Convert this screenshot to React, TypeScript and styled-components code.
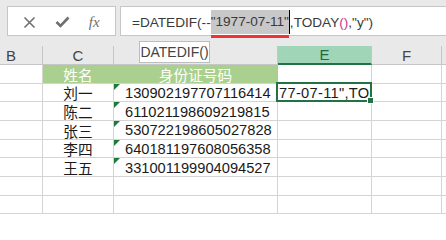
import React from 'react';
import styled, { createGlobalStyle } from 'styled-components';

const GlobalStyle = createGlobalStyle`
  html, body {
    margin: 0;
    padding: 0;
    background: #ffffff;
    overflow: hidden;
  }
`;

const Window = styled.div`
  position: relative;
  width: 446px;
  height: 215px;
  overflow: hidden;
  font-family: "Liberation Sans", "Noto Sans CJK SC", sans-serif;
  background: #ffffff;
`;

const FormulaBar = styled.div`
  display: flex;
  align-items: stretch;
  gap: 4px;
  height: 46px;
  box-sizing: border-box;
  padding: 6px 0 10px 7px;
  background: #e9e9e9;
`;

const ActionBox = styled.div`
  width: 109px;
  box-sizing: border-box;
  display: flex;
  align-items: center;
  justify-content: space-around;
  padding: 2px 6px 0;
  background: #ffffff;
  border: 1px solid #c6c6c6;
`;

const FxLabel = styled.span`
  font-family: "Liberation Serif", serif;
  font-style: italic;
  font-size: 15px;
  color: #6f6f6f;
`;

const FormulaInput = styled.div`
  flex: 1;
  display: flex;
  align-items: center;
  padding: 2px 0 0 11px;
  background: #ffffff;
  border: 1px solid #c6c6c6;
  border-right: none;
  font-size: 13.6px;
  color: #3a3a3a;
  white-space: nowrap;
`;

const Underlined = styled.span`
  display: inline-block;
  padding-bottom: 1px;
  border-bottom: 3px solid #ec3438;
  margin-top: 4px;
`;

const Highlight = styled.span`
  display: inline-block;
  background: #c8c8c8;
  line-height: 24px;
`;

const Caret = styled.span`
  display: inline-block;
  width: 1px;
  height: 24px;
  background: #000000;
  vertical-align: top;
`;

const Paren = styled.span`
  color: #c2398f;
`;

const Sheet = styled.div`
  display: grid;
  grid-template-columns: 43px 71px 164px 94px 70px 1fr;
  grid-template-rows: 19px repeat(8, 18.67px);
`;

const HeadCell = styled.div<{ $active?: boolean; $align?: string }>`
  display: flex;
  align-items: center;
  justify-content: ${p => p.$align || 'center'};
  padding-left: ${p => (p.$align ? '6px' : '0')};
  box-sizing: border-box;
  font-size: 15px;
  color: ${p => (p.$active ? '#1f6b40' : '#444444')};
  background: ${p => (p.$active ? '#a0d6b7' : '#e9e9e9')};
  border-right: 1px solid #c6c6c6;
  border-bottom: ${p => (p.$active ? '2px solid #217346' : '1px solid #c6c6c6')};
`;

const Cell = styled.div<{ $title?: boolean; $align?: string; $flag?: boolean; $selected?: boolean }>`
  position: relative;
  display: flex;
  align-items: center;
  justify-content: ${p => p.$align || 'flex-start'};
  padding: 1px 4px 0 ${p => (p.$flag ? '11px' : p.$selected ? '1px' : '4px')};
  box-sizing: border-box;
  font-size: 14.67px;
  white-space: nowrap;
  overflow: ${p => (p.$selected ? 'visible' : 'hidden')};
  color: ${p => (p.$title ? '#ffffff' : '#1a1a1a')};
  background: ${p => (p.$title ? '#a9d08e' : '#ffffff')};
  border-right: 1px solid ${p => (p.$title ? '#a9d08e' : '#d4d4d4')};
  border-bottom: 1px solid #d4d4d4;

  &::before {
    content: '';
    display: ${p => (p.$flag ? 'block' : 'none')};
    position: absolute;
    left: 0;
    top: 0;
    width: 0;
    height: 0;
    border-top: 6px solid #1e7a3c;
    border-right: 6px solid transparent;
  }

  &::after {
    content: '';
    display: ${p => (p.$selected ? 'block' : 'none')};
    position: absolute;
    left: -2px;
    top: -2px;
    right: -1px;
    bottom: -1px;
    border: 2px solid #217346;
    pointer-events: none;
  }
`;

const EditText = styled.span`
  display: block;
  letter-spacing: 0.3px;
`;

const Handle = styled.span`
  position: absolute;
  right: -3px;
  bottom: -3px;
  width: 5px;
  height: 5px;
  background: #217346;
  border: 1px solid #ffffff;
  z-index: 2;
`;

const Tip = styled.div`
  position: absolute;
  left: 139px;
  top: 41px;
  width: 71px;
  height: 22px;
  box-sizing: border-box;
  display: flex;
  align-items: center;
  justify-content: center;
  background: #ffffff;
  border: 1px solid #bdbdbd;
  font-size: 14px;
  color: #444444;
`;

const people = [
  ['刘一', '130902197707116414'],
  ['陈二', '611021198609219815'],
  ['张三', '530722198605027828'],
  ['李四', '640181197608056358'],
  ['王五', '331001199904094527'],
];

const CrossIcon = () => (
  <svg width="13" height="13" viewBox="0 0 13 13">
    <path d="M1.5 1.5 L11.5 11.5 M11.5 1.5 L1.5 11.5" stroke="#6f6f6f" strokeWidth="1.6" fill="none" />
  </svg>
);

const CheckIcon = () => (
  <svg width="15" height="12" viewBox="0 0 15 12">
    <path d="M1.5 6 L5.5 10 L13.5 1.5" stroke="#6f6f6f" strokeWidth="2.6" fill="none" />
  </svg>
);

export default function App() {
  return (
    <>
      <GlobalStyle />
      <Window>
        <FormulaBar>
          <ActionBox>
            <CrossIcon />
            <CheckIcon />
            <FxLabel>fx</FxLabel>
          </ActionBox>
          <FormulaInput>
            =DATEDIF(--
            <Underlined>
              <Highlight>"1977-07-11"</Highlight>
            </Underlined>
            <Caret />
            ,TODAY<Paren>()</Paren>,"y")
          </FormulaInput>
        </FormulaBar>
        <Sheet>
          <HeadCell $align="flex-start">B</HeadCell>
          <HeadCell>C</HeadCell>
          <HeadCell>D</HeadCell>
          <HeadCell $active>E</HeadCell>
          <HeadCell>F</HeadCell>
          <HeadCell />

          <Cell />
          <Cell $title $align="center">姓名</Cell>
          <Cell $title $align="center">身份证号码</Cell>
          <Cell />
          <Cell />
          <Cell />

          {people.map(([name, id], i) => (
            <React.Fragment key={id}>
              <Cell />
              <Cell $align="center">{name}</Cell>
              <Cell $flag>{id}</Cell>
              {i === 0 ? (
                <Cell $selected>
                  <EditText>77-07-11",TO</EditText>
                  <Handle />
                </Cell>
              ) : (
                <Cell />
              )}
              <Cell />
              <Cell />
            </React.Fragment>
          ))}

          {[0, 1].map(r => (
            <React.Fragment key={r}>
              <Cell />
              <Cell />
              <Cell />
              <Cell />
              <Cell />
              <Cell />
            </React.Fragment>
          ))}
        </Sheet>
        <Tip>DATEDIF()</Tip>
      </Window>
    </>
  );
}
